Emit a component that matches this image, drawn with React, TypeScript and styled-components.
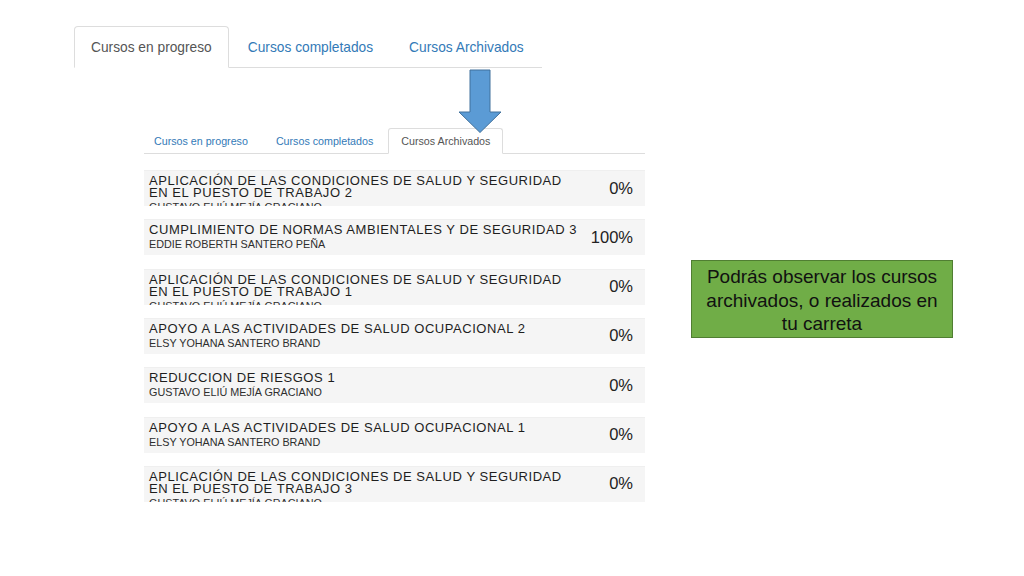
import React from "react";
import styled, { createGlobalStyle } from "styled-components";

const GlobalStyle = createGlobalStyle`
  html, body {
    margin: 0;
    padding: 0;
    background: #ffffff;
  }
  body {
    font-family: "Liberation Sans", Arial, Helvetica, sans-serif;
  }
  * {
    box-sizing: border-box;
  }
`;

interface Course {
  title: string;
  teacher: string;
  progress: string;
}

const courses: Course[] = [
  {
    title: "APLICACIÓN DE LAS CONDICIONES DE SALUD Y SEGURIDAD EN EL PUESTO DE TRABAJO 2",
    teacher: "GUSTAVO ELIÚ MEJÍA GRACIANO",
    progress: "0%"
  },
  {
    title: "CUMPLIMIENTO DE NORMAS AMBIENTALES Y DE SEGURIDAD 3",
    teacher: "EDDIE ROBERTH SANTERO PEÑA",
    progress: "100%"
  },
  {
    title: "APLICACIÓN DE LAS CONDICIONES DE SALUD Y SEGURIDAD EN EL PUESTO DE TRABAJO 1",
    teacher: "GUSTAVO ELIÚ MEJÍA GRACIANO",
    progress: "0%"
  },
  {
    title: "APOYO A LAS ACTIVIDADES DE SALUD OCUPACIONAL 2",
    teacher: "ELSY YOHANA SANTERO BRAND",
    progress: "0%"
  },
  {
    title: "REDUCCION DE RIESGOS 1",
    teacher: "GUSTAVO ELIÚ MEJÍA GRACIANO",
    progress: "0%"
  },
  {
    title: "APOYO A LAS ACTIVIDADES DE SALUD OCUPACIONAL 1",
    teacher: "ELSY YOHANA SANTERO BRAND",
    progress: "0%"
  },
  {
    title: "APLICACIÓN DE LAS CONDICIONES DE SALUD Y SEGURIDAD EN EL PUESTO DE TRABAJO 3",
    teacher: "GUSTAVO ELIÚ MEJÍA GRACIANO",
    progress: "0%"
  }
];

const Page = styled.div`
  position: relative;
  width: 1024px;
  height: 576px;
  padding-top: 26px;
  overflow: hidden;
`;

const BigTabs = styled.ul`
  display: flex;
  list-style: none;
  margin: 0 0 0 74px;
  padding: 0;
  width: 468px;
  border-bottom: 1px solid #dddddd;
`;

const BigTab = styled.li<{ $active?: boolean }>`
  display: flex;
  align-items: center;
  flex-shrink: 0;
  white-space: nowrap;
  height: 42px;
  margin: 0 2px -1px 0;
  padding: 0 16px;
  font-size: 13.75px;
  color: ${(p) => (p.$active ? "#555555" : "#337ab7")};
  background: ${(p) => (p.$active ? "#ffffff" : "transparent")};
  border: 1px solid ${(p) => (p.$active ? "#dddddd" : "transparent")};
  border-bottom-color: ${(p) => (p.$active ? "#ffffff" : "transparent")};
  border-radius: 4px 4px 0 0;
`;

const Arrow = styled.svg`
  position: absolute;
  left: 458px;
  top: 69px;
`;

const Content = styled.div`
  display: flex;
  align-items: flex-start;
  margin-top: 60px;
  padding-left: 144px;
`;

const Panel = styled.div`
  width: 501px;
`;

const SmallTabs = styled.ul`
  display: flex;
  list-style: none;
  margin: 0;
  padding: 0;
  border-bottom: 1px solid #dddddd;
`;

const SmallTab = styled.li<{ $active?: boolean }>`
  display: flex;
  align-items: center;
  flex-shrink: 0;
  white-space: nowrap;
  height: 26px;
  margin: 0 2px -1px 0;
  padding: 0 12px;
  font-size: 10.7px;
  color: ${(p) => (p.$active ? "#555555" : "#337ab7")};
  background: ${(p) => (p.$active ? "#ffffff" : "transparent")};
  border: 1px solid ${(p) => (p.$active ? "#dddddd" : "transparent")};
  border-bottom-color: ${(p) => (p.$active ? "#ffffff" : "transparent")};
  border-radius: 3px 3px 0 0;

  &:first-child {
    padding-left: 9px;
  }
`;

const CourseList = styled.div`
  display: flex;
  flex-direction: column;
  gap: 13.33px;
  margin-top: 16px;
`;

const CourseRow = styled.div`
  display: grid;
  grid-template-columns: 434px 1fr;
  grid-template-rows: 100%;
  height: 36px;
  overflow: hidden;
  background: #f5f5f5;
  box-shadow: inset 0 1px 0 #efefef;
`;

const CourseInfo = styled.div`
  padding: 5px 0 0 5px;
  overflow: hidden;
`;

const CourseTitle = styled.div`
  font-size: 13px;
  line-height: 12px;
  letter-spacing: 0.55px;
  color: #1e1e1e;
`;

const Teacher = styled.div`
  margin-top: 2px;
  font-size: 10.8px;
  line-height: 12px;
  color: #2e2e2e;
`;

const Progress = styled.div`
  align-self: center;
  padding-right: 12px;
  text-align: right;
  font-size: 16.5px;
  color: #222222;
`;

const Note = styled.div`
  width: 262px;
  height: 78px;
  margin: 132px 0 0 46px;
  padding: 4px 12px 0;
  background: #70ad47;
  border: 1px solid #507e32;
  font-size: 19px;
  line-height: 23.5px;
  text-align: center;
  color: #111111;
`;

export default function App() {
  return (
    <Page>
      <GlobalStyle />
      <BigTabs>
        <BigTab $active>Cursos en progreso</BigTab>
        <BigTab>Cursos completados</BigTab>
        <BigTab>Cursos Archivados</BigTab>
      </BigTabs>

      <Arrow width="44" height="65" viewBox="0 0 44 65">
        <path
          d="M12 1 H32 V43 H43 L22 63.5 L1 43 H12 Z"
          fill="#5b9bd5"
          stroke="#41719c"
          strokeWidth="1"
        />
      </Arrow>

      <Content>
        <Panel>
          <SmallTabs>
            <SmallTab>Cursos en progreso</SmallTab>
            <SmallTab>Cursos completados</SmallTab>
            <SmallTab $active>Cursos Archivados</SmallTab>
          </SmallTabs>
          <CourseList>
            {courses.map((c, i) => (
              <CourseRow key={i}>
                <CourseInfo>
                  <CourseTitle>{c.title}</CourseTitle>
                  <Teacher>{c.teacher}</Teacher>
                </CourseInfo>
                <Progress>{c.progress}</Progress>
              </CourseRow>
            ))}
          </CourseList>
        </Panel>
        <Note>
          Podrás observar los cursos archivados, o realizados en tu carreta
        </Note>
      </Content>
    </Page>
  );
}
